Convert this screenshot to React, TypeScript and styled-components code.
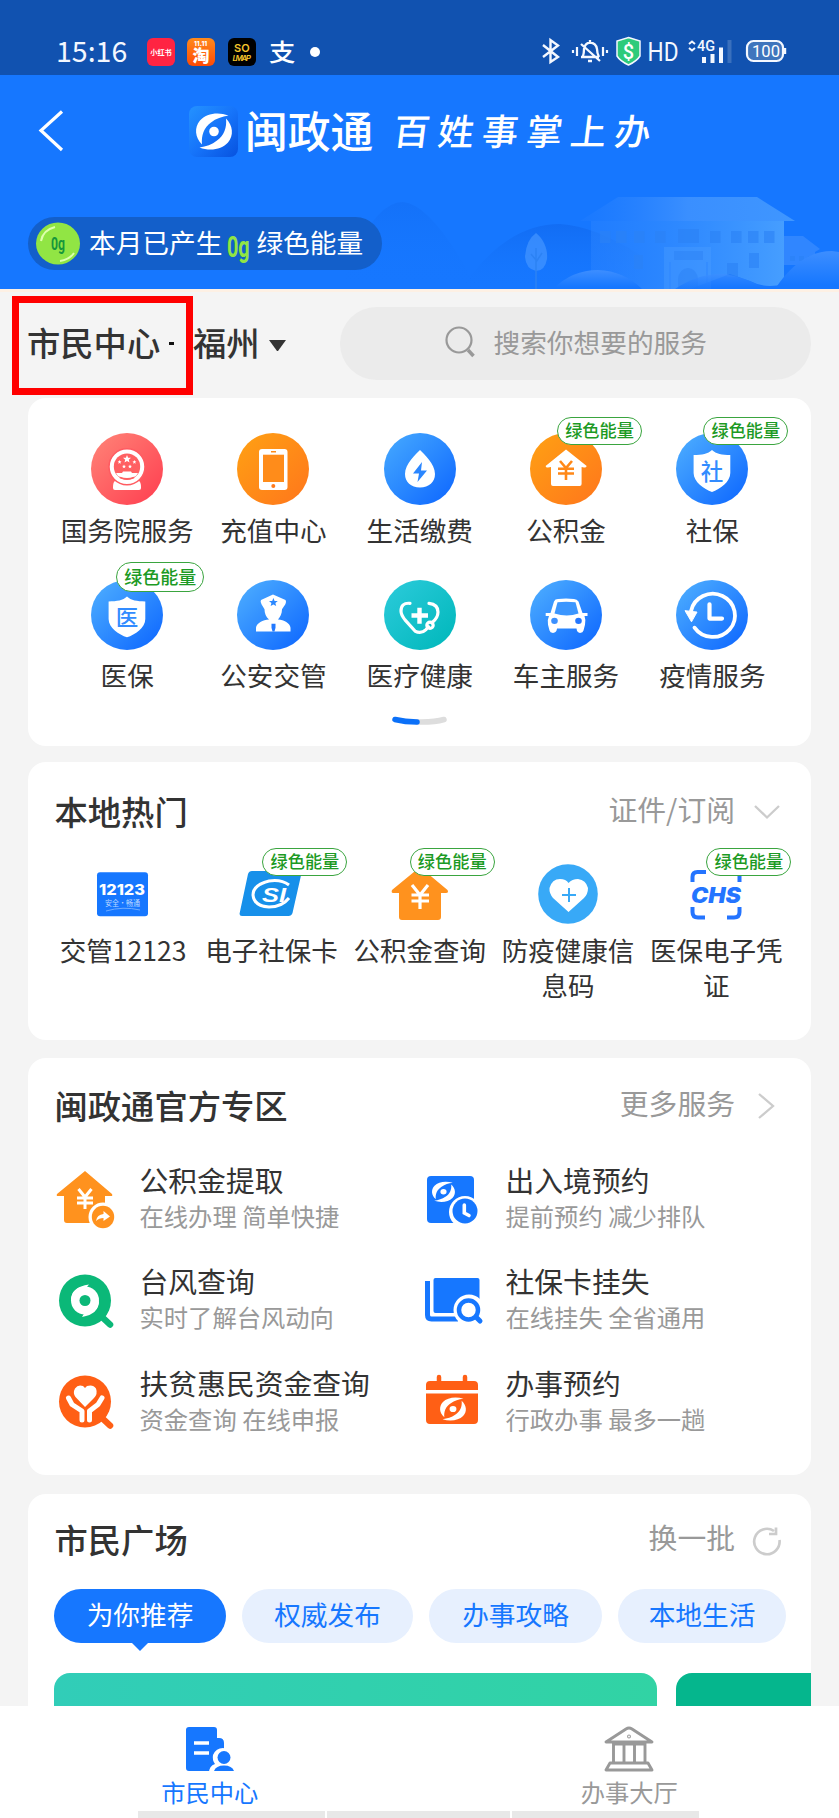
import React from 'react';
import styled, { createGlobalStyle, css } from 'styled-components';

const GlobalStyle = createGlobalStyle`
  * { box-sizing: border-box; }
  body {
    margin: 0;
    background: #f4f4f4;
    font-family: "Noto Sans CJK SC", "Noto Sans", sans-serif;
    color: #333;
  }
  svg { display: block; flex: none; overflow: visible; }
`;

const Page = styled.div`
  width: 839px;
  height: 1818px;
  display: flex;
  flex-direction: column;
  overflow: hidden;
  background: #f4f4f4;
`;

/* ---------- status bar ---------- */
const StatusBar = styled.div`
  height: 75px;
  flex: none;
  background: #1152b0;
  display: flex;
  align-items: flex-end;
  justify-content: space-between;
  padding: 0 53px 9px 56px;
  color: #f2f7ff;
`;
const StatusGroup = styled.div`
  display: flex;
  align-items: center;
  height: 29px;
`;
const Clock = styled.span`
  width: 91px;
  margin-top: -4px;
  font-size: 28.5px;
  line-height: 29px;
`;
const AppBadge = styled.span<{ $bg: string; $gap: number }>`
  width: 28px;
  height: 28px;
  margin-right: ${(p) => p.$gap}px;
  border-radius: 6px;
  background: ${(p) => p.$bg};
`;
const Dot = styled.span`
  width: 10px;
  height: 10px;
  margin-left: 13px;
  border-radius: 50%;
  background: #fff;
`;

/* ---------- header ---------- */
const Header = styled.header`
  position: relative;
  height: 214px;
  flex: none;
  background: #1677ff;
  display: flex;
  flex-direction: column;
`;
const Scenery = styled.svg`
  position: absolute;
  inset: 0;
  overflow: hidden;
`;
const TitleBar = styled.div`
  position: relative;
  display: flex;
  align-items: center;
  height: 112px;
  padding-left: 37px;
`;
const Brand = styled.div`
  display: flex;
  align-items: center;
  margin-left: 124px;
`;
const BrandName = styled.h1`
  margin: 0 0 0 5px;
  font-size: 42.8px;
  line-height: 50px;
  font-weight: 500;
  color: #fff;
  width: 149px;
  padding-bottom: 4px;
`;
const Slogan = styled.span`
  font-size: 36px;
  line-height: 48px;
  letter-spacing: 8.2px;
  color: #fff;
  font-weight: 500;
  transform: skewX(-7deg);
  white-space: nowrap;
  padding-bottom: 4px;
`;
const EnergyPill = styled.div`
  position: relative;
  display: flex;
  align-items: center;
  width: 354px;
  height: 53px;
  margin: 30px 0 0 28px;
  padding-left: 8px;
  border-radius: 27px;
  background: #135fca;
  color: #fff;
  font-size: 26.7px;
  line-height: 32px;
  white-space: nowrap;
`;
const EnergyText = styled.span<{ $ml: number }>`
  margin: -4px 0 0 ${(p) => p.$ml}px;
`;

/* ---------- location and search ---------- */
const Toolbar = styled.div`
  height: 109px;
  flex: none;
  border-top: 3px solid #fdf0e4;
  display: flex;
  align-items: center;
  padding: 0 28px 0 12px;
`;
const Highlight = styled.div`
  width: 181px;
  height: 99px;
  border: 7px solid #f00;
  display: flex;
  align-items: center;
  padding: 0 0 7px 8px;
  font-size: 33.3px;
  line-height: 40px;
  font-weight: 500;
  white-space: nowrap;
`;
const Dash = styled.i`
  width: 5px;
  height: 3px;
  margin: 3px 0 0 9px;
  background: #111;
`;
const City = styled.span`
  width: 76px;
  margin-bottom: 6px;
  font-size: 33.3px;
  line-height: 40px;
  font-weight: 500;
`;
const Triangle = styled.i`
  width: 17px;
  border: 8.5px solid transparent;
  border-top: 11px solid #333;
  border-bottom: 0;
`;
const Search = styled.div`
  width: 471px;
  height: 73px;
  margin: 0 0 4px auto;
  border-radius: 37px;
  background: #ebebeb;
  display: flex;
  align-items: center;
  padding: 0 0 3px 105px;
  color: #999;
  font-size: 26.7px;
`;
const SearchText = styled.span`
  margin-left: 18.5px;
  line-height: 34px;
`;

/* ---------- cards ---------- */
const Card = styled.section<{ $h: number; $mb?: number }>`
  width: 783px;
  height: ${(p) => p.$h}px;
  margin: 0 0 ${(p) => p.$mb ?? 0}px 28px;
  flex: none;
  border-radius: 18px;
  background: #fff;
  overflow: hidden;
`;
const CardHead = styled.div<{ $h: number; $pt: number }>`
  display: flex;
  justify-content: space-between;
  height: ${(p) => p.$h}px;
  padding: ${(p) => p.$pt}px 31px 0 26.5px;
`;
const CardTitle = styled.h2`
  margin: 0;
  font-size: 33.3px;
  line-height: 40px;
  font-weight: 500;
`;
const More = styled.div`
  display: flex;
  align-items: center;
  height: 36px;
  color: #999;
  font-size: 28.8px;
  line-height: 36px;
  white-space: nowrap;
`;
const MoreIcon = styled.span`
  width: 28px;
  margin: 6px 0 0 17px;
`;

const ServiceGrid = styled.div`
  display: grid;
  grid-template-columns: repeat(5, 146.3px);
  grid-template-rows: 147px 133px;
  padding: 35px 0 0 26px;
`;
const Service = styled.div`
  display: flex;
  flex-direction: column;
  align-items: center;
  font-size: 26.6px;
  white-space: nowrap;
`;
const ServiceLabel = styled.span`
  margin-top: 7px;
  line-height: 36px;
`;
const IconBox = styled.div`
  position: relative;
`;
const badgeSize = {
  normal: css`width: 85px; height: 28px; font-size: 17.2px;`,
  large: css`width: 88px; height: 30px; font-size: 18px;`,
};
const Badge = styled.span<{ $x: number; $y: number; $large?: boolean }>`
  position: absolute;
  left: ${(p) => p.$x}px;
  top: ${(p) => p.$y}px;
  ${(p) => (p.$large ? badgeSize.large : badgeSize.normal)}
  display: flex;
  align-items: center;
  justify-content: center;
  padding-bottom: 2px;
  border: 1.4px solid #3aa53f;
  border-radius: 15px;
  background: #fff;
  color: #1c9a24;
  font-weight: 500;
  line-height: 20px;
  white-space: nowrap;
`;
const Pager = styled.div`
  display: flex;
  justify-content: center;
`;

const HotGrid = styled.div`
  display: grid;
  grid-template-columns: repeat(5, 148.3px);
  padding-left: 21px;
`;
const HotItem = styled.div`
  display: flex;
  flex-direction: column;
  align-items: center;
`;
const HotIcon = styled.div`
  position: relative;
  width: 64px;
  height: 64px;
`;
const HotLabel = styled.span`
  width: 134px;
  margin-top: 6px;
  font-size: 26.5px;
  line-height: 35px;
  text-align: center;
  white-space: pre-line;
`;

const ZoneGrid = styled.div`
  display: grid;
  grid-template-columns: 366px 1fr;
  grid-template-rows: 100.5px 102px 102px;
  padding-left: 26px;
`;
const ZoneItem = styled.div`
  display: flex;
  align-items: flex-start;
`;
const ZoneIcon = styled.div<{ $up?: number }>`
  margin-top: ${(p) => 8 - (p.$up ?? 0)}px;
`;
const ZoneText = styled.div`
  display: flex;
  flex-direction: column;
  margin: 1px 0 0 23.5px;
  white-space: nowrap;
`;
const ZoneTitle = styled.span`
  font-size: 28.8px;
  line-height: 38px;
`;
const ZoneSub = styled.span`
  font-size: 24.3px;
  line-height: 34px;
  color: #999;
`;

const Tabs = styled.div`
  display: flex;
  gap: 16px;
  padding: 0 26px;
  height: 84px;
`;
const Tab = styled.div<{ $active?: boolean; $w: number }>`
  position: relative;
  flex: none;
  width: ${(p) => p.$w}px;
  height: 54px;
  padding-bottom: 4px;
  border-radius: 27px;
  background: ${(p) => (p.$active ? '#1677ff' : '#e7f0fe')};
  color: ${(p) => (p.$active ? '#fff' : '#1677ff')};
  font-size: 26.7px;
  line-height: 49px;
  text-align: center;
  ${(p) =>
    p.$active &&
    css`
      &::after {
        content: '';
        position: absolute;
        left: 77px;
        top: 53px;
        border: 9px solid transparent;
        border-top-color: #1677ff;
        border-bottom: 0;
      }
    `}
`;
const Banners = styled.div`
  display: flex;
  gap: 19px;
  padding-left: 26px;
`;
const Banner = styled.div<{ $w: number; $bg: string; $r: string }>`
  flex: none;
  width: ${(p) => p.$w}px;
  height: 60px;
  border-radius: ${(p) => p.$r};
  background: ${(p) => p.$bg};
`;
const Content = styled.main`
  flex: 1;
  min-height: 0;
  overflow: hidden;
  display: flex;
  flex-direction: column;
`;

/* ---------- bottom navigation ---------- */
const BottomNav = styled.nav`
  height: 112px;
  flex: none;
  display: flex;
  flex-direction: column;
  background: #fff;
`;
const NavRow = styled.div`
  display: grid;
  grid-template-columns: 1fr 1fr;
  height: 105px;
`;
const NavItem = styled.div<{ $c: string }>`
  display: flex;
  flex-direction: column;
  align-items: center;
  padding-top: 20px;
  color: ${(p) => p.$c};
  font-size: 24.3px;
  line-height: 34px;
`;
const NavLabel = styled.span`
  margin-top: 1px;
`;
const Scrubber = styled.div`
  display: grid;
  grid-template-columns: 187px 183px 187px;
  gap: 2px;
  height: 7px;
  margin-left: 138px;
`;
const Segment = styled.i`
  background: #e8e8e8;
`;

/* ---------- drawings ---------- */
const crescent = 'M14.5 -16C4 -20 -8 -18 -14 -11C-20 -4 -19 6 -12 13C-13 4 -10 -4 -3 -9C2 -13 8 -15 14.5 -16Z';
const Eye = () => (
  <g fill="#fff">
    <path d={crescent} />
    <path d={crescent} transform="rotate(180)" />
    <circle r="4.8" />
  </g>
);

const Disc = ({ id, from, to, h = 72, children }: { id: string; from: string; to: string; h?: number; children: React.ReactNode }) => (
  <svg width="72" height={h} viewBox="0 0 72 72" preserveAspectRatio="none">
    <defs>
      <linearGradient id={id} x1="0.1" y1="0.1" x2="0.9" y2="0.9">
        <stop stopColor={from} />
        <stop offset="1" stopColor={to} />
      </linearGradient>
    </defs>
    <circle cx="36" cy="36" r="36" fill={`url(#${id})`} />
    {children}
  </svg>
);

const star = 'M0 -4L1.1 -1.3L4 -1.2L1.8 .7L2.5 3.5L0 1.9L-2.5 3.5L-1.8 .7L-4 -1.2L-1.1 -1.3Z';
const shield = 'M36 17C40 21 46 22 54.3 22V40C54.3 49 44 56 36 59C28 56 17.6 49 17.6 40V22C26 22 32 21 36 17Z';

const EmblemIcon = () => (
  <Disc id="d1" from="#ff7e74" to="#ff4453">
    <path d="M25 47H47C50 49 50 52 50 55Q50 57 48 57H24Q22 57 22 55C22 52 22 49 25 47Z" fill="#fff" />
    <circle cx="36" cy="33.7" r="18" fill="#fff" stroke="#ff5b61" strokeWidth="1.5" />
    <circle cx="36" cy="33.7" r="13.2" fill="#ff6062" />
    <path d="M25 40H31L32 38.5H40L41 40H47L45 43Q36 48 27 43Z" fill="#fff" />
    <path d="M29 44.5Q36 47 43 44.5" stroke="#ff6062" strokeWidth="1.6" fill="none" />
    <g fill="#fff">
      <path d={star} transform="translate(36 26)" />
      <path d={star} transform="translate(28.6 29) scale(.5)" />
      <path d={star} transform="translate(43.4 29) scale(.5)" />
      <path d={star} transform="translate(33 33.5) scale(.5)" />
      <path d={star} transform="translate(39 33.5) scale(.5)" />
    </g>
  </Disc>
);
const PhoneIcon = () => (
  <Disc id="d2" from="#ff9d14" to="#ff7a1b">
    <rect x="22" y="16" width="28.5" height="41" rx="3" fill="#fff" />
    <rect x="26" y="21.7" width="21" height="27.3" fill="#ff8c1a" />
    <path d="M34 18.8H39" stroke="#ff8c1a" strokeWidth="1.4" />
    <circle cx="36.3" cy="53" r="2" fill="#ff7a1b" />
  </Disc>
);
const DropIcon = () => (
  <Disc id="d3" from="#41a4ff" to="#126cff">
    <path d="M36 17C40 21 51 31 51 41C51 49 45 54.5 36 54.5C27 54.5 21 49 21 41C21 31 32 21 36 17Z" fill="#fff" />
    <path d="M38 29L29 40.5H35L33.5 49L43 37.5H37Z" fill="#2a86ff" />
  </Disc>
);
const HouseDiscIcon = () => (
  <Disc id="d4" from="#ff9d14" to="#ff7a1b">
    <path d="M36 16.5L56.7 33Q56 35 54 34.5L51.6 34V51Q51.6 53 49.6 53H23Q21 53 21 51V34L18 34.5Q16 35 15.6 33Z" fill="#fff" />
    <path d="M30 28L36 35L42 28M28 35.7H44M28 40.5H44M36 35V47" stroke="#ff8818" strokeWidth="2.6" fill="none" />
  </Disc>
);
const ShieldIcon = ({ id, text, h }: { id: string; text: string; h?: number }) => (
  <Disc id={id} from="#49a9ff" to="#126cff" h={h}>
    <path d={shield} fill="#fff" />
    <text x="36" y="46.5" textAnchor="middle" fontSize="22.5" fontWeight="500" fill="#328cff">{text}</text>
  </Disc>
);
const OfficerIcon = () => (
  <Disc id="d7" from="#49a9ff" to="#126cff" h={70}>
    <path d="M36 15L48.5 20.5Q50 23 47 27L45 30C45 35 43 38 41 40.500C47 41 53 44 53.500 49V53H19V49C19.500 44 26 41 32 40.500C29 38 27.500 34 27.500 30L24.500 25Q23 22 24 20.500Z" fill="#fff" />
    <path d={star} transform="translate(36.400 23) scale(1.100)" fill="#2b88ff" />
    <path d="M34.500 45H38.500V49L37.500 53H35.500L34.500 49Z" fill="#2379ff" />
  </Disc>
);
const StethoscopeIcon = () => (
  <Disc id="d8" from="#28c9d8" to="#03b9bd" h={70}>
    <g fill="none" stroke="#fff" strokeWidth="3.2" strokeLinecap="round" strokeLinejoin="round">
      <path d="M26 24Q17 23 17 32Q17 36 21 41L31 52.5Q37 56 42 51L44.5 48" />
      <path d="M45 24Q54 25 54 33Q54 39 48 44" />
      <circle cx="46" cy="46.5" r="3.2" />
    </g>
    <path d="M35.5 28.5V45M27.5 36.5H44" stroke="#fff" strokeWidth="4.4" />
  </Disc>
);
const CarIcon = () => (
  <Disc id="d9" from="#49a9ff" to="#126cff" h={70}>
    <path d="M24 22Q25 19.5 28 19.5Q36 18.7 44 19.5Q47 19.7 48.5 22L52.5 34H57.5V37H54.5Q56 41 55 46L53.5 52Q53 54.5 50 54.5Q47 54.5 46.5 50H27Q26.5 54.5 23 54.5Q20 54.5 19.5 52L18 46Q17 41 19 37H15.7V34H20.5Z" fill="#fff" />
    <path d="M27.5 23Q36 21.5 45.5 23L48.5 34.500Q37 38.500 24.500 34.500Z" fill="#3b96ff" />
    <circle cx="24.5" cy="42" r="3.3" fill="#3b90ff" />
    <circle cx="48.5" cy="42" r="3.3" fill="#2377ff" />
  </Disc>
);
const HistoryIcon = () => (
  <Disc id="d10" from="#49a9ff" to="#126cff" h={70}>
    <path d="M15 32A22.2 22.2 0 1 1 18.5 49" fill="none" stroke="#fff" strokeWidth="3.8" strokeLinecap="round" />
    <path d="M9 31.5L21 33L15.5 43Z" fill="#fff" stroke="#fff" strokeLinejoin="round" />
    <path d="M33.5 25V39.7H46" fill="none" stroke="#fff" strokeWidth="4.2" strokeLinecap="round" strokeLinejoin="round" />
  </Disc>
);

const Icon12123 = () => (
  <svg width="64" height="64" viewBox="0 0 64 64">
    <rect x="6" y="10.3" width="51" height="44" rx="3" fill="#1677ff" />
    <text x="8" y="33" fontFamily="Inter, sans-serif" fontSize="15" fontWeight="800" fill="#fff" textLength="46" lengthAdjust="spacingAndGlyphs">12123</text>
    <text x="14" y="43.5" fontSize="7.5" fill="#bcd8ff" textLength="35" lengthAdjust="spacingAndGlyphs">安全·畅通</text>
    <path d="M15 49Q32 44 49 48" fill="none" stroke="#6facff" />
  </svg>
);
const SocialCardIcon = () => (
  <svg width="64" height="64" viewBox="0 0 64 64">
    <path d="M12 9H63L53.5 51Q52.5 54 49.5 54H3Q0 54 .7 51L9 12Q10 9 13 9Z" fill="#1790ea" />
    <path d="M50 23Q42 17 30 19Q14 23 14 33Q15 44 30 45Q43 45 50 36" fill="none" stroke="#fff" strokeWidth="3" />
    <text x="23" y="40" fontFamily="Liberation Sans, sans-serif" fontSize="21" fontStyle="italic" fontWeight="700" fill="#fff" textLength="24" lengthAdjust="spacingAndGlyphs">SI</text>
  </svg>
);
const HouseIcon = () => (
  <svg width="64" height="64" viewBox="0 0 64 64">
    <path d="M32 5L59.5 28Q61 31 58 31H53V55Q53 58 50 58H14Q11 58 11 55V31H5Q3 31 4 28Z" fill="#ff921e" />
    <path d="M24 23L32 33L40 23M23.5 33H41M23.5 39H41M32 33V47" fill="none" stroke="#fff" strokeWidth="3.2" />
  </svg>
);
const HeartIcon = () => (
  <svg width="64" height="64" viewBox="0 0 64 64">
    <circle cx="32" cy="32" r="29.8" fill="#38a9f7" />
    <path d="M32.5 50L17 36Q13 31 13.5 26Q16 17 24 17Q30 17 32.5 21Q36 17 42 17Q50 18 52 26Q52 32 48 36Z" fill="#fff" />
    <path d="M33 26V40M26 33H40" stroke="#38a9f7" strokeWidth="2" />
  </svg>
);
const ChsIcon = () => (
  <svg width="64" height="64" viewBox="0 0 64 64">
    <path d="M8.500 20V15Q8.500 10 13.500 10H22M44 10H55.500V20M8.500 45V50Q8.500 55.500 14 55.500H21M43 55.500H50Q55.500 55.500 55.500 50V45" fill="none" stroke="#2474ff" strokeWidth="4" />
    <text x="7" y="40.500" fontFamily="Inter, sans-serif" fontSize="21" fontStyle="italic" fontWeight="900" fill="#2474ff" textLength="50" lengthAdjust="spacingAndGlyphs">CHS</text>
  </svg>
);

const WithdrawIcon = () => (
  <svg width="62" height="62" viewBox="0 0 62 62">
    <path d="M31 3L58 26Q59 28 57 28H51V52Q51 55 48 55H13Q10 55 10 52V28H4Q2 28 3 26Z" fill="#ff921e" />
    <path d="M24.500 21L31 29L37.500 21M23 30H39M23 35H39M31 29V41" fill="none" stroke="#fff" strokeWidth="3" />
    <circle cx="49" cy="49" r="14.500" fill="#fff" />
    <circle cx="49" cy="49" r="11.200" fill="#ff921e" />
    <path d="M42 53Q43 46.500 49.500 46V43L56 48.500L49.500 53V50Q45 50 42 53Z" fill="#fff" />
  </svg>
);
const BorderIcon = () => (
  <svg width="62" height="62" viewBox="0 0 62 62">
    <rect x="7" y="8" width="47" height="47" rx="4" fill="#1677ff" />
    <g transform="translate(23.500 23.800) scale(.64 .56)"><Eye /></g>
    <circle cx="45" cy="44" r="16" fill="#fff" />
    <circle cx="45" cy="43" r="12.500" fill="#1677ff" />
    <path d="M44.300 37V45L49 47.500" fill="none" stroke="#fff" strokeWidth="3.600" strokeLinecap="round" />
  </svg>
);
const TyphoonIcon = () => (
  <svg width="62" height="62" viewBox="0 0 62 62">
    <path d="M48 48L56 55.500" stroke="#0bb878" strokeWidth="6.500" strokeLinecap="round" />
    <circle cx="31" cy="31.500" r="26" fill="#0bb878" />
    <circle cx="31" cy="31.500" r="14" fill="#fff" />
    <path d="M17 31Q17 18 35 15.500L32 19M45 32Q45 45 28 48L31 43" fill="#fff" />
    <circle cx="31" cy="31.500" r="5.500" fill="#0bb878" />
  </svg>
);
const CardLossIcon = () => (
  <svg width="62" height="62" viewBox="0 0 62 62">
    <path d="M7.500 12V46Q7.500 50 11.500 50H38" stroke="#1677ff" strokeWidth="5" fill="none" />
    <rect x="13.500" y="9" width="46" height="35" rx="2" fill="#1677ff" />
    <circle cx="49" cy="41" r="15.500" fill="#fff" />
    <path d="M56 48L60 52" stroke="#1677ff" strokeWidth="5" strokeLinecap="round" />
    <circle cx="48.500" cy="41" r="9.500" fill="#fff" stroke="#1677ff" strokeWidth="4.500" />
  </svg>
);
const AidIcon = () => (
  <svg width="62" height="62" viewBox="0 0 62 62">
    <path d="M48 48L56 55.500" stroke="#ff5f15" strokeWidth="6.500" strokeLinecap="round" />
    <circle cx="31" cy="31.500" r="26" fill="#ff5f15" />
    <path d="M31 37L21.500 27Q18.500 23 21 18.500Q24 14 29 16L31 18L33 16Q39 14 42 18.500Q44 24 40 28Z" fill="#fff" />
    <path d="M14.500 28L18 34.500L28 41V50M48 28L44 34.500L35.500 41V50" fill="none" stroke="#fff" strokeWidth="5" strokeLinejoin="round" strokeLinecap="round" />
  </svg>
);
const CalendarIcon = () => (
  <svg width="62" height="62" viewBox="0 0 62 62">
    <path d="M19 7V13M45 7V13" stroke="#ff5f15" strokeWidth="4.500" strokeLinecap="round" />
    <path d="M6 20V15Q6 11 10 11H54Q58 11 58 15V20ZM6 23.500H58V50Q58 54 54 54H10Q6 54 6 50Z" fill="#ff5f15" />
    <g transform="translate(33 39) scale(.72 .64)"><Eye /></g>
  </svg>
);

const SceneryArt = () => (
  <Scenery width="839" height="214" viewBox="0 75 839 214">
    <defs>
      <linearGradient id="hill" x1="0" y1="0" x2="0" y2="1"><stop stopColor="#0f65ea" stopOpacity=".65" /><stop offset="1" stopColor="#1677ff" stopOpacity="0" /></linearGradient>
      <linearGradient id="wall" x1="0" y1="0" x2="1" y2="0"><stop stopColor="#2a83ff" stopOpacity=".5" /><stop offset="1" stopColor="#469eff" /></linearGradient>
      <linearGradient id="roof" x1="0" y1="0" x2="1" y2="0"><stop stopColor="#227dff" stopOpacity=".3" /><stop offset=".5" stopColor="#3a8fff" /><stop offset="1" stopColor="#3f96ff" /></linearGradient>
      <linearGradient id="mound" x1="0" y1="0" x2="0" y2="1"><stop stopColor="#3d8eff" /><stop offset=".9" stopColor="#1677ff" /></linearGradient>
    </defs>
    <path d="M350 265Q375 202 403 202Q430 204 470 275L480 289H340Z" fill="url(#hill)" opacity=".45" />
    <path d="M470 277Q510 224 560 224Q595 226 640 255V289H460Z" fill="url(#hill)" opacity=".85" />
    <path d="M580 221L618 197H757L795 221Z" fill="url(#roof)" />
    <path d="M591 221H784V284Q765 289 750 281L730 274L690 289H591Z" fill="url(#wall)" />
    <path d="M784 236H803L820 249L815 252V265H784Z" fill="#3086ff" />
    <g fill="#2b82f6" opacity=".6">
      {[600, 616, 634, 655, 710, 731, 748, 764].map((x) => <rect key={x} x={x} y="231" width="10.500" height="12" />)}
      <rect x="678" y="229" width="21" height="14" />
      <rect x="634" y="255" width="9" height="14" />
      <rect x="749" y="253" width="10" height="15" />
      <rect x="727" y="263" width="11" height="14" />
      {[790, 799, 808].map((x) => <rect key={x} x={x} y="256" width="5" height="5" />)}
    </g>
    <path d="M664 247H711V289H664Z" fill="#4a9dff" opacity=".4" />
    <path d="M674 251H703V260H674ZM678 289V279Q679 269 688 268Q697 269 698 279V289Z" fill="#2b82f6" opacity=".5" />
    <path d="M670 262V289M707 262V289" stroke="#2f88ff" strokeWidth="1.500" opacity=".7" />
    <path d="M536 233C544 239 548 250 547 259Q545 271 536 271Q526 269 525 257Q526 240 536 233Z" fill="#4596ff" opacity=".7" />
    <path d="M536 248V289M536 260L531 254M536 262L542 253" stroke="#2c82f4" strokeWidth="1.500" fill="none" />
    <path d="M553 289Q572 270 598 270Q624 271 642 289Z" fill="url(#mound)" />
    <path d="M675 289Q698 273 725 274Q748 278 766 289Z" fill="url(#mound)" opacity=".7" />
    <path d="M775 289Q800 251 832 251L839 252V289Z" fill="url(#mound)" />
  </Scenery>
);

const StatusIcons = () => (
  <svg width="245" height="29" viewBox="541 37 245 29" fill="none" stroke="#f4f8ff">
    <path d="M543 45L558 57L550.500 62V40L558 45.500L543 57" strokeWidth="2.400" />
    <path d="M573 50V53M577 47V56M603 47V56M607 50V53" strokeWidth="2.200" />
    <path d="M581 57H599M583 56Q584 53 584 49Q585 43 590 42.500Q596 43 597 49Q597 53 599 57M581 44L600 61M588 61H592M590 40V43" strokeWidth="2.300" />
    <path d="M628.500 37.500L640 41V56Q637 61 628.500 65Q620 61 617 56V41Z" fill="#2dcb7b" strokeWidth="1.500" />
    <text x="628.500" y="58.500" textAnchor="middle" fontFamily="Roboto, sans-serif" fontSize="20" fontWeight="500" fill="#fff" stroke="none">$</text>
    <text x="647.500" y="61" fontFamily="Roboto, sans-serif" fontSize="26" fill="#f4f8ff" stroke="none" textLength="31" lengthAdjust="spacingAndGlyphs">HD</text>
    <path d="M689 44L692 41.500L695 44M689 48L692 50.500L695 48" strokeWidth="2" />
    <text x="697" y="51" fontFamily="Roboto, sans-serif" fontSize="14.500" fontWeight="500" fill="#f4f8ff" stroke="none" textLength="18" lengthAdjust="spacingAndGlyphs">4G</text>
    <path d="M704 57V63M712.500 54V63M721 47.500V63" strokeWidth="4" />
    <path d="M729.500 40V63" strokeWidth="4" stroke="#3a70bd" />
    <rect x="747" y="41" width="36" height="20" rx="6.500" fill="#3f75bd" strokeWidth="2.200" />
    <path d="M785 48V54" strokeWidth="2.400" />
    <text x="752" y="56.500" fontFamily="Roboto, sans-serif" fontSize="16" fill="#fff" stroke="none" textLength="28" lengthAdjust="spacingAndGlyphs">100</text>
  </svg>
);

/* ---------- data ---------- */
const services = [
  { label: '国务院服务', icon: <EmblemIcon /> },
  { label: '充值中心', icon: <PhoneIcon /> },
  { label: '生活缴费', icon: <DropIcon /> },
  { label: '公积金', icon: <HouseDiscIcon />, badge: true },
  { label: '社保', icon: <ShieldIcon id="d5" text="社" />, badge: true },
  { label: '医保', icon: <ShieldIcon id="d6" text="医" h={70} />, badge: true, large: true },
  { label: '公安交管', icon: <OfficerIcon /> },
  { label: '医疗健康', icon: <StethoscopeIcon /> },
  { label: '车主服务', icon: <CarIcon /> },
  { label: '疫情服务', icon: <HistoryIcon /> },
];
const hot = [
  { label: '交管12123', icon: <Icon12123 /> },
  { label: '电子社保卡', icon: <SocialCardIcon />, badge: 23 },
  { label: '公积金查询', icon: <HouseIcon />, badge: 22 },
  { label: '防疫健康信\n息码', icon: <HeartIcon /> },
  { label: '医保电子凭\n证', icon: <ChsIcon />, badge: 22 },
];
const zone = [
  { title: '公积金提取', sub: '在线办理 简单快捷', icon: <WithdrawIcon /> },
  { title: '出入境预约', sub: '提前预约 减少排队', icon: <BorderIcon /> },
  { title: '台风查询', sub: '实时了解台风动向', icon: <TyphoonIcon /> },
  { title: '社保卡挂失', sub: '在线挂失 全省通用', icon: <CardLossIcon /> },
  { title: '扶贫惠民资金查询', sub: '资金查询 在线申报', icon: <AidIcon /> },
  { title: '办事预约', sub: '行政办事 最多一趟', icon: <CalendarIcon /> },
];

export default function App() {
  return (
    <Page>
      <GlobalStyle />
      <StatusBar>
        <StatusGroup>
          <Clock>15:16</Clock>
          <AppBadge $bg="#ff2442" $gap={12}>
            <svg width="28" height="28"><text x="3.200" y="17" fontSize="7.200" fontWeight="700" fill="#fff">小红书</text></svg>
          </AppBadge>
          <AppBadge $bg="linear-gradient(#ff8a1c, #ff4a05)" $gap={13}>
            <svg width="28" height="28">
              <text x="7" y="8" fontFamily="Inter, sans-serif" fontSize="6.500" fontWeight="800" fill="#fff">11.11</text>
              <text x="5.500" y="24" fontSize="17" fontWeight="900" fill="#fff">淘</text>
            </svg>
          </AppBadge>
          <AppBadge $bg="#000" $gap={13}>
            <svg width="28" height="28" fill="#f6c52c" fontFamily="Inter, sans-serif" fontWeight="600">
              <text x="6" y="13.500" fontSize="11">SO</text>
              <text x="4.500" y="23" fontSize="8" fontStyle="italic" textLength="18.500">LMAP</text>
            </svg>
          </AppBadge>
          <svg width="28" height="28"><text transform="translate(0 22.500) scale(1.100 1)" fontSize="24" fontWeight="500" fill="#fff">支</text></svg>
          <Dot />
        </StatusGroup>
        <StatusGroup><StatusIcons /></StatusGroup>
      </StatusBar>

      <Header>
        <SceneryArt />
        <TitleBar>
          <svg width="28" height="42" viewBox="0 0 28 42"><path d="M25 1.500L4 20.500L25 40" fill="none" stroke="#fff" strokeWidth="3.200" /></svg>
          <Brand>
            <svg width="51" height="51" viewBox="0 0 51 51">
              <defs><linearGradient id="logo" x1="0" y1="0" x2="1" y2="1"><stop stopColor="#2492ff" /><stop offset=".5" stopColor="#1674fa" /><stop offset="1" stopColor="#0752df" /></linearGradient></defs>
              <rect width="49" height="51" rx="8" fill="url(#logo)" />
              <g transform="translate(25 25.500)"><Eye /></g>
            </svg>
            <BrandName>闽政通</BrandName>
            <Slogan>百姓事掌上办</Slogan>
          </Brand>
        </TitleBar>
        <EnergyPill>
          <svg width="44" height="43" viewBox="0 0 44 43">
            <ellipse cx="22" cy="21.500" rx="22" ry="21" fill="#91e544" />
            <path d="M5 19Q7 8 19 5M24 39Q33 38 38 31" fill="none" stroke="#ddffae" strokeWidth="2" />
            <text transform="translate(15 28) scale(.66 1)" fontFamily="Roboto, sans-serif" fontSize="18.500" fontWeight="700" fill="#16963b">0g</text>
          </svg>
          <EnergyText $ml={9}>本月已产生</EnergyText>
          <svg width="28" height="42" viewBox="0 0 28 42"><text transform="translate(5 34) scale(.66 1)" fontFamily="Roboto, sans-serif" fontSize="30" fontWeight="700" fill="#91e544">0g</text></svg>
          <EnergyText $ml={6}>绿色能量</EnergyText>
        </EnergyPill>
      </Header>

      <Content>
        <Toolbar>
          <Highlight>市民中心<Dash /></Highlight>
          <City>福州</City>
          <Triangle />
          <Search>
            <svg width="30" height="31" viewBox="0 0 30 31" fill="none" stroke="#999"><circle cx="14" cy="14" r="12.500" strokeWidth="2.200" /><path d="M23 24L28.500 30" strokeWidth="3.500" /></svg>
            <SearchText>搜索你想要的服务</SearchText>
          </Search>
        </Toolbar>

        <Card $h={348} $mb={16}>
          <ServiceGrid>
            {services.map((s) => (
              <Service key={s.label}>
                <IconBox>
                  {s.icon}
                  {s.badge && <Badge $x={s.large ? 25 : 27} $y={s.large ? -18 : -16} $large={s.large}>绿色能量</Badge>}
                </IconBox>
                <ServiceLabel>{s.label}</ServiceLabel>
              </Service>
            ))}
          </ServiceGrid>
          <Pager>
            <svg width="56" height="14" viewBox="0 0 56 14" fill="none" strokeWidth="5.500" strokeLinecap="round">
              <path d="M25 9Q42 9.500 52 6.500" stroke="#ddd" />
              <path d="M3 6.500Q13 9 25 9" stroke="#0b70f8" />
            </svg>
          </Pager>
        </Card>

        <Card $h={277.5} $mb={18.5}>
          <CardHead $h={100} $pt={29}>
            <CardTitle>本地热门</CardTitle>
            <More>证件/订阅<MoreIcon><svg width="28" height="16"><path d="M3 2L15 13.500L27 2" fill="none" stroke="#ccc" strokeWidth="2.300" /></svg></MoreIcon></More>
          </CardHead>
          <HotGrid>
            {hot.map((h) => (
              <HotItem key={h.label}>
                <HotIcon>{h.icon}{h.badge && <Badge $x={h.badge} $y={-14}>绿色能量</Badge>}</HotIcon>
                <HotLabel>{h.label}</HotLabel>
              </HotItem>
            ))}
          </HotGrid>
        </Card>

        <Card $h={417} $mb={19}>
          <CardHead $h={102} $pt={27}>
            <CardTitle>闽政通官方专区</CardTitle>
            <More>更多服务<MoreIcon><svg width="28" height="26"><path d="M7 1L21 13L7 25" fill="none" stroke="#ccc" strokeWidth="2.300" /></svg></MoreIcon></More>
          </CardHead>
          <ZoneGrid>
            {zone.map((z, i) => (
              <ZoneItem key={z.title}>
                <ZoneIcon $up={i > 3 ? 1 : 0}>{z.icon}</ZoneIcon>
                <ZoneText><ZoneTitle>{z.title}</ZoneTitle><ZoneSub>{z.sub}</ZoneSub></ZoneText>
              </ZoneItem>
            ))}
          </ZoneGrid>
        </Card>

        <Card $h={300}>
          <CardHead $h={95} $pt={25}>
            <CardTitle>市民广场</CardTitle>
            <More>换一批<MoreIcon>
              <svg width="30" height="30" viewBox="0 -1 30 30" fill="none" stroke="#ccc" strokeWidth="2.700"><path d="M27.500 14A12.700 12.700 0 1 1 22 5M24 1.500V8H17" /></svg>
            </MoreIcon></More>
          </CardHead>
          <Tabs>
            <Tab $active $w={172}>为你推荐</Tab>
            <Tab $w={171}>权威发布</Tab>
            <Tab $w={173}>办事攻略</Tab>
            <Tab $w={168}>本地生活</Tab>
          </Tabs>
          <Banners>
            <Banner $w={603} $r="16px" $bg="linear-gradient(90deg, #31cdb8, #31d3a4)" />
            <Banner $w={135} $r="16px 0 0 16px" $bg="#05b68d" />
          </Banners>
        </Card>
      </Content>

      <BottomNav>
        <NavRow>
          <NavItem $c="#1677ff">
            <svg width="50" height="48" viewBox="0 0 50 48">
              <path d="M4 1H29Q32 1 32 4V12H34Q39 12 39 17V45H4Q1 45 1 42V4Q1 1 4 1Z" fill="#1677ff" />
              <path d="M9 17H24M9 27H24" stroke="#fff" strokeWidth="3.500" />
              <path d="M24 47Q24 40 30 38Q27 34 28 29Q31 22 38 22Q48 23 48 31Q48 36 45 38V47Z" fill="#fff" />
              <circle cx="39" cy="31.500" r="6.500" fill="#1677ff" />
              <path d="M29 45Q31 39.500 39 39.500Q47 39.500 49 45Z" fill="#1677ff" />
            </svg>
            <NavLabel>市民中心</NavLabel>
          </NavItem>
          <NavItem $c="#999">
            <svg width="50" height="48" viewBox="0 0 50 48" fill="none" stroke="#999" strokeWidth="2.900" strokeLinejoin="round">
              <path d="M2 16L22 3Q25 1 28 3L48 16ZM9.500 17V37M20 17V37M30.500 17V37M41 17V37M6 37H44L48 44H2ZM9 18H41" />
              <circle cx="25" cy="10.500" r=".5" />
            </svg>
            <NavLabel>办事大厅</NavLabel>
          </NavItem>
        </NavRow>
        <Scrubber><Segment /><Segment /><Segment /></Scrubber>
      </BottomNav>
    </Page>
  );
}
